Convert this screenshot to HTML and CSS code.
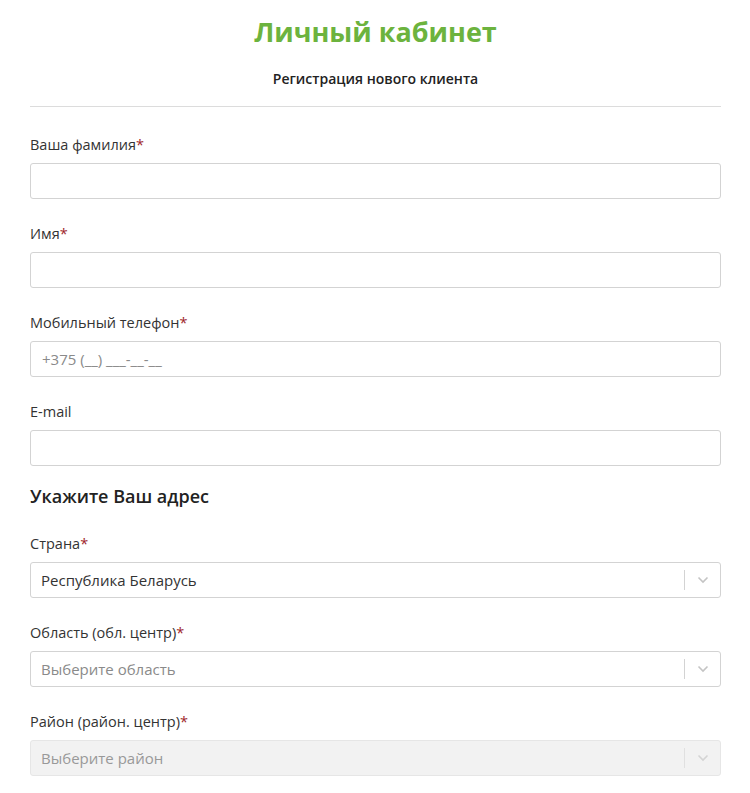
FILE: index.html
```html
<!DOCTYPE html>
<html lang="ru">
<head>
<meta charset="utf-8">
<link rel="stylesheet" href="styles.css">
</head>
<body>
<div class="page">
  <h1 class="title">Личный кабинет</h1>
  <div class="subtitle">Регистрация нового клиента</div>
  <div class="divider"></div>
  <form class="form">
    <div class="field">
      <label class="label">Ваша фамилия<span class="req">*</span></label>
      <input class="input" type="text">
    </div>
    <div class="field">
      <label class="label">Имя<span class="req">*</span></label>
      <input class="input" type="text">
    </div>
    <div class="field">
      <label class="label">Мобильный телефон<span class="req">*</span></label>
      <input class="input" type="text" placeholder="+375 (__) ___-__-__">
    </div>
    <div class="field field-tight">
      <label class="label">E-mail</label>
      <input class="input" type="text">
    </div>
    <h2 class="section">Укажите Ваш адрес</h2>
    <div class="field">
      <label class="label">Страна<span class="req">*</span></label>
      <div class="select">
        <span class="select-value">Республика Беларусь</span>
        <span class="select-sep"></span>
        <span class="select-arrow"><svg width="12" height="8" viewBox="0 0 12 8"><path d="M1.5 1.5 L6 6 L10.5 1.5" fill="none" stroke="#c4c4c4" stroke-width="1.6"/></svg></span>
      </div>
    </div>
    <div class="field">
      <label class="label">Область (обл. центр)<span class="req">*</span></label>
      <div class="select">
        <span class="select-value placeholder">Выберите область</span>
        <span class="select-sep"></span>
        <span class="select-arrow"><svg width="12" height="8" viewBox="0 0 12 8"><path d="M1.5 1.5 L6 6 L10.5 1.5" fill="none" stroke="#c4c4c4" stroke-width="1.6"/></svg></span>
      </div>
    </div>
    <div class="field">
      <label class="label">Район (район. центр)<span class="req">*</span></label>
      <div class="select disabled">
        <span class="select-value placeholder">Выберите район</span>
        <span class="select-sep"></span>
        <span class="select-arrow"><svg width="12" height="8" viewBox="0 0 12 8"><path d="M1.5 1.5 L6 6 L10.5 1.5" fill="none" stroke="#d4d4d4" stroke-width="1.6"/></svg></span>
      </div>
    </div>
  </form>
</div>
</body>
</html>
```
FILE: styles.css
```css
* { box-sizing: border-box; }
html, body { margin: 0; padding: 0; background: #fff; }
body {
  font-family: "Open Sans", "Liberation Sans", sans-serif;
  color: #333;
}
.page {
  width: 691px;
  margin-left: 30px;
  padding-top: 14px;
}
.title {
  margin: 0;
  text-align: center;
  font-size: 27px;
  line-height: 36px;
  font-weight: 700;
  color: #6cb33e;
}
.subtitle {
  margin-top: 20px;
  text-align: center;
  font-size: 14px;
  line-height: 18px;
  font-weight: 600;
  color: #222;
}
.divider {
  margin-top: 18px;
  height: 1px;
  background: #dcdcdc;
}
.form {
  display: flex;
  flex-direction: column;
  padding-top: 28px;
}
.field {
  display: flex;
  flex-direction: column;
  margin-bottom: 25px;
}
.field-tight { margin-bottom: 18px; }
.label {
  font-size: 14.5px;
  line-height: 20px;
  color: #333;
  margin-bottom: 8px;
}
.req { color: #9e1f2b; }
.input {
  height: 36px;
  border: 1px solid #d3d3d3;
  border-radius: 3px;
  padding: 0 11px;
  font-family: inherit;
  font-size: 15px;
  color: #333;
  background: #fff;
  outline: none;
}
.input::placeholder { color: #8a8a8a; }
.section {
  margin: 0 0 26px 0;
  font-size: 18px;
  line-height: 24px;
  font-weight: 600;
  color: #222;
}
.select {
  height: 36px;
  border: 1px solid #d3d3d3;
  border-radius: 3px;
  display: flex;
  align-items: center;
  background: #fff;
}
.select.disabled { background: #f2f2f2; border-color: #e6e6e6; }
.select-value {
  flex: 1;
  padding-left: 10px;
  font-size: 15px;
  color: #333;
}
.select-value.placeholder { color: #8a8a8a; }
.select.disabled .select-value.placeholder { color: #999; }
.select-sep {
  width: 1px;
  height: 20px;
  background: #d3d3d3;
}
.select.disabled .select-sep { background: #e0e0e0; }
.select-arrow {
  width: 35px;
  display: flex;
  justify-content: center;
  align-items: center;
}
```
